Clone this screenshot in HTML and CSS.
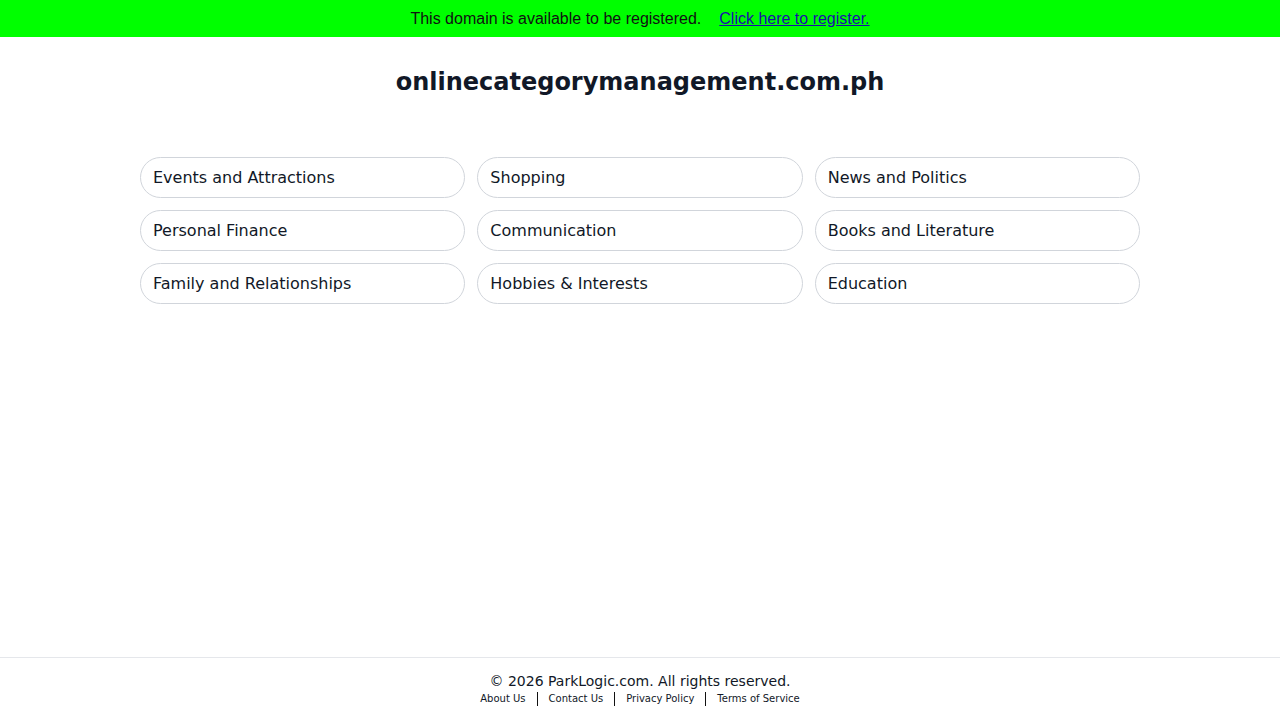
FILE: index.html
```html
<!DOCTYPE html>
<html lang="en">
<head>
    <meta charset="UTF-8">
    <meta name="viewport" content="width=device-width, initial-scale=1.0">
    <title>onlinecategorymanagement.com.ph</title>
    <link rel="stylesheet" href="styles.css">
</head>
<body>
    <div class="topbar">
        <span>This domain is available to be registered.</span>
        <a href="#">Click here to register.</a>
    </div>

    <main class="page">
        <h1 class="domain">onlinecategorymanagement.com.ph</h1>

        <div class="categories">
            <a href="#" class="category">Events and Attractions</a>
            <a href="#" class="category">Shopping</a>
            <a href="#" class="category">News and Politics</a>
            <a href="#" class="category">Personal Finance</a>
            <a href="#" class="category">Communication</a>
            <a href="#" class="category">Books and Literature</a>
            <a href="#" class="category">Family and Relationships</a>
            <a href="#" class="category">Hobbies &amp; Interests</a>
            <a href="#" class="category">Education</a>
        </div>
    </main>

    <footer class="footer">
        <p class="copyright">&copy; 2026 ParkLogic.com. All rights reserved.</p>
        <nav class="footer-links">
            <a href="#">About Us</a>
            <span class="sep"></span>
            <a href="#">Contact Us</a>
            <span class="sep"></span>
            <a href="#">Privacy Policy</a>
            <span class="sep"></span>
            <a href="#">Terms of Service</a>
        </nav>
    </footer>
</body>
</html>
```

FILE: styles.css
```css
:root {
    --text-color: #111827;
    --border-color: #d1d5db;
}
html, body {
    height: 100%;
}
body {
    margin: 0;
    display: flex;
    flex-direction: column;
    font-family: "DejaVu Sans", sans-serif;
    color: var(--text-color);
    background: white;
}
.topbar {
    background-color: #00ff00;
    height: 37px;
    display: flex;
    justify-content: center;
    align-items: center;
    gap: 18px;
    font-family: "Liberation Sans", Arial, sans-serif;
    font-size: 16px;
    color: #111;
}
.topbar a {
    color: #1a0dab;
    text-decoration: underline;
}
.page {
    flex: 1;
    width: 1000px;
    margin: 0 auto;
}
.domain {
    margin: 29px 0 0;
    text-align: center;
    font-size: 24px;
    line-height: 32px;
    font-weight: 700;
}
.categories {
    margin-top: 59px;
    display: grid;
    grid-template-columns: repeat(3, 1fr);
    gap: 12px;
}
.category {
    display: block;
    height: 41px;
    box-sizing: border-box;
    padding: 0 12px;
    border: 1px solid var(--border-color);
    border-radius: 9999px;
    font-size: 16px;
    line-height: 39px;
    color: var(--text-color);
    text-decoration: none;
}
.footer {
    border-top: 1px solid #e5e7eb;
    padding: 14px 0 13px;
    text-align: center;
}
.copyright {
    margin: 0;
    font-size: 14px;
    line-height: 18px;
}
.footer-links {
    display: flex;
    justify-content: center;
    align-items: center;
    gap: 11px;
    padding-top: 1px;
    font-size: 10px;
    line-height: 16px;
}
.footer-links a {
    color: var(--text-color);
    text-decoration: none;
}
.footer-links .sep {
    width: 0;
    height: 14px;
    border-left: 1px solid #111;
}
```
